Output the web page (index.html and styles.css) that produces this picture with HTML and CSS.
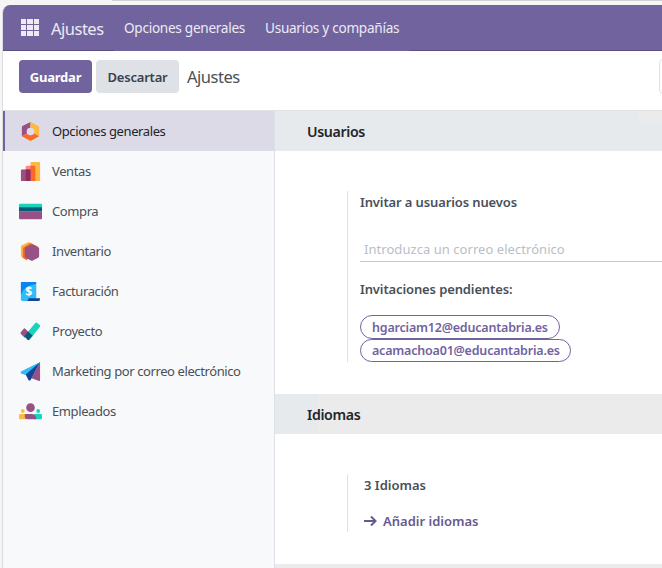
FILE: index.html
```html
<!DOCTYPE html>
<html lang="es">
<head>
<meta charset="utf-8">
<title>Ajustes</title>
<link rel="stylesheet" href="styles.css">
</head>
<body>
<div class="tabstrip"></div>
<div class="app">
  <header class="navbar">
    <svg class="apps" width="18" height="17" viewBox="0 0 18 17" fill="#eceaf2"><path d="M0 0h5v5H0zM6 0h6v5H6zM13 0h5v5h-5zM0 6h5v5H0zM6 6h6v5H6zM13 6h5v5h-5zM0 12h5v5H0zM6 12h6v5H6zM13 12h5v5h-5z"/></svg>
    <span class="brand">Ajustes</span>
    <nav class="menu"><span class="menu-general">Opciones generales</span><span class="menu-users">Usuarios y compañías</span></nav>
  </header>
  <div class="control-panel">
    <button class="btn btn-primary"><span>Guardar</span></button>
    <button class="btn btn-secondary"><span>Descartar</span></button>
    <span class="title">Ajustes</span>
    <div class="search"></div>
  </div>
  <div class="body">
    <aside class="sidebar">
      <div class="item active">
        <svg class="icon" viewBox="0 0 24 24"><path d="M12 2 4 6q-1 .5-1 1.500V17l9-5z" fill="#985184"/><path d="m12 2 8 4q1 .5 1 1.500V17l-9-5z" fill="#fbb945"/><path d="m3 17 9-5 9 5-8 4.500q-1 .5-2 0z" fill="#fc6826"/><circle cx="12" cy="12" r="4" fill="#dcdde6"/></svg>
        <span>Opciones generales</span></div>
      <div class="item">
        <svg class="icon" viewBox="0 0 24 24"><rect x="12" y="2" width="10" height="20" rx="1" fill="#fbb945"/><rect x="7" y="6" width="10" height="16" rx="1" fill="#fc868b"/><path d="M12 6h4l1 1v15h-5z" fill="#fc6826"/><rect x="2" y="10" width="10" height="12" rx="1" fill="#985184"/><path d="M7 10h5v12H7z" fill="#952b5a"/></svg>
        <span>Ventas</span></div>
      <div class="item">
        <svg class="icon" viewBox="0 0 24 24"><path d="M0 12h24v7q0 1-1 1H1q-1 0-1-1z" fill="#985184"/><path d="M0 8h24V5q0-1-1-1H1Q0 4 0 5z" fill="#1ad3bb"/><path d="M0 7.500h24V12H0z" fill="#005e7a"/></svg>
        <span>Compra</span></div>
      <div class="item">
        <svg class="icon" viewBox="0 0 24 24"><path d="m10 2 8 4-12 14-3-2q-1-.5-1-1.500V7q0-1 1-1.500z" fill="#fbb945"/><path d="m12 3 8 4L8 21l-4-2.500V8z" fill="#fc6826"/><path d="m13.500 4.500 6.500 3q1 .5 1 1.500v8q0 1-1 1.500L13.500 22 7 18.500q-1-.5-1-1.500V9q0-1 1-1.500z" fill="#985184"/></svg>
        <span>Inventario</span></div>
      <div class="item">
        <svg class="icon" viewBox="0 0 24 24"><path d="M2 2h15q1 0 1 1v19H4q-2 0-2-2z" fill="#2ebcfa"/><path d="M2 3q0-1 1-1h14q1 0 1 1v1Q5 6 2 15z" fill="#0a83f5"/><path d="M10 19h12q0 3-2 3H6q4 0 4-3" fill="#144496"/><text class="dollar" x="10" y="16.500" text-anchor="middle">$</text></svg>
        <span>Facturación</span></div>
      <div class="item">
        <svg class="icon" viewBox="0 0 24 24"><path d="M2 12.500 5 9q.7-.7 1.500 0l4 4-4.500 5.500-4-4q-1-1 0-2" fill="#985184"/><path d="m9.500 12 7.500-9q1-1 2 0l2.700 2.300q1 1 0 2L13.500 17.500z" fill="#1ad3bb"/><path d="m9.500 12 4.800 4.500-3.500 4q-1 1-2 0L5.500 17z" fill="#005e7a"/></svg>
        <span>Proyecto</span></div>
      <div class="item">
        <svg class="icon" viewBox="0 0 24 24"><path d="m22 2-20 10q-.5 1 0 2l6 2z" fill="#2ebcfa"/><path d="M22 2v19q0 1-1 1l-8-3z" fill="#985184"/><path d="M22 2 7 15l3 6q1 1 2 0z" fill="#144496"/></svg>
        <span>Marketing por correo electrónico</span></div>
      <div class="item">
        <svg class="icon" viewBox="0 0 24 24"><circle cx="12" cy="8" r="4.500" fill="#985184"/><circle cx="4" cy="11.500" r="2" fill="#fbb945"/><circle cx="20" cy="11.500" r="2" fill="#1ad3bb"/><path d="M1.500 14.500H8V20H1q-1 0-1-1v-3q0-1.500 1.500-1.500" fill="#fbb945"/><path d="M16 14.500h6.500Q24 14.500 24 16v3q0 1-1 1h-7z" fill="#1ad3bb"/><path d="M6 15q0-.5 1-.5h6q5 0 5 5.500H9q-3 0-3-3z" fill="#985184"/></svg>
        <span>Empleados</span></div>
    </aside>
    <main class="content">
      <h2 class="heading"><span>Usuarios</span></h2>
      <section class="setting users">
        <div class="label"><span>Invitar a usuarios nuevos</span></div>
        <div class="field"><span>Introduzca un correo electrónico</span></div>
        <div class="label pending"><span>Invitaciones pendientes:</span></div>
        <div class="tag tag-a"><span>hgarciam12@educantabria.es</span></div>
        <div class="tag tag-b"><span>acamachoa01@educantabria.es</span></div>
      </section>
      <h2 class="heading heading-lang"><span>Idiomas</span></h2>
      <section class="setting languages">
        <div class="label count"><span>3 Idiomas</span></div>
        <div class="add"><svg width="13" height="12" viewBox="0 0 13 12" fill="none" stroke="#66598f" stroke-width="2"><path d="M0 6h11M7 1.500 11.500 6 7 10.500"/></svg><span>Añadir idiomas</span></div>
      </section>
      <div class="heading heading-next"></div>
    </main>
  </div>
</div>
</body>
</html>
```
FILE: styles.css
```css
* { box-sizing: border-box; }
body { margin: 0; width: 662px; height: 568px; overflow: hidden; background: #f5f5f5; font-family: "Noto Sans", "Open Sans", sans-serif; font-size: 13px; color: #495057; }
span { white-space: nowrap; }
.tabstrip { height: 5px; background: linear-gradient(#cfcfcf, #cfcfcf) 112px 0 / 550px 1px no-repeat; }
.app { margin-left: 2px; height: 563px; border-left: 1px solid #dcdce0; border-top-left-radius: 8px; overflow: hidden; background: #fff; }
.navbar { height: 46px; display: flex; align-items: center; padding-left: 18px; color: #eceaf2; background: linear-gradient(#5a4f7f, #5a4f7f) 0 45px / 111px 1px no-repeat, linear-gradient(#5a4f7f, #5a4f7f) 406px 45px / 253px 1px no-repeat, #71639e; }
.apps { margin-top: -1px; }
.brand { width: 73px; margin-left: 12px; font-size: 16.500px; letter-spacing: -.5px; }
.menu { display: flex; margin-top: -1px; }
.menu-general, .menu-users { font-size: 13.600px; letter-spacing: -.28px; }
.menu-general { width: 141px; }
.control-panel { height: 60px; display: flex; align-items: flex-start; padding: 9px 0 0 16px; border-bottom: 1px solid #dee2e6; }
.btn { height: 33px; border: 0; border-radius: 4px; padding: 0; font: 700 13px "Noto Sans", sans-serif; letter-spacing: -.2px; }
.btn-primary { width: 73px; background: #71639e; color: #fff; margin-right: 4px; }
.btn-secondary { width: 83px; background: #dee2e6; color: #374151; font-weight: 600; margin-right: 8px; }
.title { font-size: 16.500px; line-height: 34px; letter-spacing: -.48px; }
.search { width: 20px; height: 35px; margin: -1px -17px 0 auto; border: 1px solid #dee2e6; border-radius: 4px; }
.body { display: flex; height: 457px; }
.sidebar { width: 272px; background: #f8f9fa; border-right: 1px solid #dee2e6; }
.item { height: 40px; display: flex; align-items: center; padding-left: 16px; font-size: 13px; letter-spacing: -.4px; }
.active { background: #dcdae7; border-left: 2px solid #71639e; padding-left: 14px; color: #212529; }
.icon { width: 23px; height: 23px; margin-right: 10px; }
.dollar { font: 700 13px "Noto Sans", sans-serif; fill: #fff; }
.content { flex: 1; min-width: 0; overflow: hidden; }
.heading { margin: 0; height: 40px; padding-left: 32px; line-height: 42px; background: linear-gradient(#ebebeb, #ebebeb) 364px 0 / 24px 12px no-repeat, #e7eaed; color: #212529; font-size: 14.200px; font-weight: 600; letter-spacing: -.36px; }
.setting { margin: 40px 0 32px 72px; border-left: 1px solid #dee2e6; padding-left: 12px; font-weight: 600; }
.users { height: 171px; }
.label { height: 22px; line-height: 22px; letter-spacing: -.12px; }
.field { height: 49px; border-bottom: 1px solid #c5c8cc; padding: 25px 0 0 4px; line-height: 22px; font-weight: 400; color: #b9bec5; letter-spacing: .05px; }
.pending { margin: 16px 0 15px; }
.count { letter-spacing: 0; }
.tag { height: 24px; width: 200px; border: 1px solid #71639e; border-radius: 12px; padding-left: 11px; line-height: 23px; color: #71639e; font-size: 12.500px; letter-spacing: -.2px; }
.tag-b { width: 211px; height: 23px; line-height: 21px; }
.heading-lang { background: linear-gradient(90deg, #e7eaed 43px, #ebebeb 43px); }
.languages { height: 58px; padding-left: 16px; }
.add { display: flex; align-items: center; margin-top: 14px; height: 22px; color: #66598f; letter-spacing: 0; }
.add svg { margin-right: 6px; }
.heading-next { background: #ebebeb; }
```
